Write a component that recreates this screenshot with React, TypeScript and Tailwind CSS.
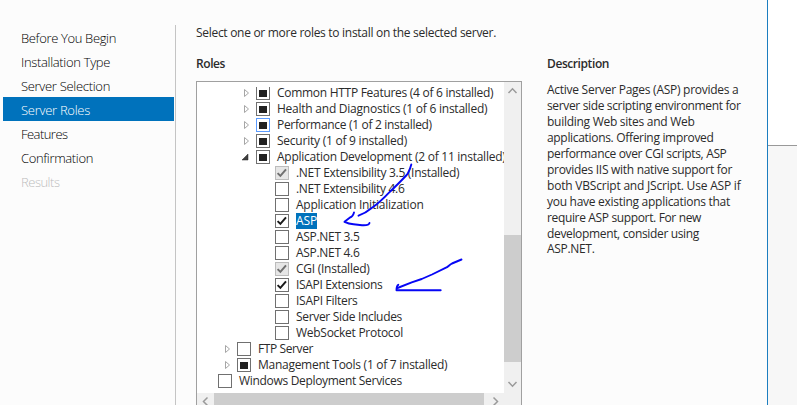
import { useLayoutEffect, useRef } from "react";

type Check = "empty" | "partial" | "checked" | "locked";

interface Role {
  label: string;
  width: number;
  level: 0 | 1 | 2 | 3;
  check: Check;
  arrow?: "closed" | "open";
  hot?: boolean;
  selected?: boolean;
}

const STEPS = [
  { label: "Before You Begin", width: 95 },
  { label: "Installation Type", width: 89 },
  { label: "Server Selection", width: 89 },
  { label: "Server Roles", width: 69, active: true },
  { label: "Features", width: 46.5 },
  { label: "Confirmation", width: 72 },
  { label: "Results", width: 38.5, disabled: true },
];

const ROLES: Role[] = [
  { label: "Common HTTP Features (4 of 6 installed)", width: 216.3, level: 2, check: "partial", arrow: "closed" },
  { label: "Health and Diagnostics (1 of 6 installed)", width: 210.3, level: 2, check: "partial", arrow: "closed" },
  { label: "Performance (1 of 2 installed)", width: 154.8, level: 2, check: "partial", arrow: "closed", hot: true },
  { label: "Security (1 of 9 installed)", width: 130, level: 2, check: "partial", arrow: "closed" },
  { label: "Application Development (2 of 11 installed)", width: 228.5, level: 2, check: "partial", arrow: "open" },
  { label: ".NET Extensibility 3.5 (Installed)", width: 163.3, level: 3, check: "locked" },
  { label: ".NET Extensibility 4.6", width: 108.5, level: 3, check: "empty" },
  { label: "Application Initialization", width: 127.5, level: 3, check: "empty" },
  { label: "ASP", width: 21, level: 3, check: "checked", selected: true },
  { label: "ASP.NET 3.5", width: 63.5, level: 3, check: "empty" },
  { label: "ASP.NET 4.6", width: 63.5, level: 3, check: "empty" },
  { label: "CGI (Installed)", width: 73.5, level: 3, check: "locked" },
  { label: "ISAPI Extensions", width: 86.3, level: 3, check: "checked" },
  { label: "ISAPI Filters", width: 61.5, level: 3, check: "empty" },
  { label: "Server Side Includes", width: 106, level: 3, check: "empty" },
  { label: "WebSocket Protocol", width: 107, level: 3, check: "empty" },
  { label: "FTP Server", width: 55, level: 1, check: "empty", arrow: "closed" },
  { label: "Management Tools (1 of 7 installed)", width: 189.3, level: 1, check: "partial", arrow: "closed" },
  { label: "Windows Deployment Services", width: 162.8, level: 0, check: "empty" },
];

const DESCRIPTION = [
  { text: "Active Server Pages (ASP) provides a", width: 191.5 },
  { text: "server side scripting environment for", width: 193.5 },
  { text: "building Web sites and Web", width: 147.5 },
  { text: "applications. Offering improved", width: 166.5 },
  { text: "performance over CGI scripts, ASP", width: 179.5 },
  { text: "provides IIS with native support for", width: 185 },
  { text: "both VBScript and JScript. Use ASP if", width: 193.5 },
  { text: "you have existing applications that", width: 183 },
  { text: "require ASP support. For new", width: 154 },
  { text: "development, consider using", width: 152 },
  { text: "ASP.NET.", width: 47.5 },
];

const INDENT = ["pl-[2px]", "pl-[21px]", "pl-[40px]", "pl-[59px]"];

/** One line of text whose tracking is adjusted to fill the given width. */
function Line({ text, width, className = "" }: { text: string; width: number; className?: string }) {
  const ref = useRef<HTMLSpanElement>(null);
  useLayoutEffect(() => {
    const el = ref.current;
    if (!el) return;
    el.style.letterSpacing = "0px";
    const natural = el.getBoundingClientRect().width;
    el.style.letterSpacing = `${(width - natural) / text.length}px`;
  }, [text, width]);
  return (
    <span ref={ref} className={`inline-block shrink-0 whitespace-pre ${className}`}>
      {text}
    </span>
  );
}

function CheckBox({ check, hot }: { check: Check; hot?: boolean }) {
  const border = hot ? "border-[#5b9bff]" : check === "locked" ? "border-[#bcbcbc]" : "border-[#707070]";
  return (
    <span
      className={`flex size-[14px] shrink-0 items-center justify-center border ${border} ${check === "locked" ? "bg-[#e6e6e6]" : "bg-white"}`}
    >
      {check === "partial" && <span className="h-[7px] w-2 bg-[#212121]" />}
      {(check === "checked" || check === "locked") && (
        <svg viewBox="0 0 12 12" className="size-3" fill="none">
          <path d="M1.6 6.1 4.4 8.9 10 2.4" stroke={check === "locked" ? "#707070" : "#1a1a1a"} strokeWidth="2" />
        </svg>
      )}
    </span>
  );
}

function Expander({ state }: { state?: "closed" | "open" }) {
  return (
    <svg viewBox="0 0 19 16" className="h-4 w-[19px] shrink-0" fill="none">
      {state === "closed" && <path d="M7.5 4.5v7l4-3.5z" stroke="#a6a6a6" />}
      {state === "open" && <path d="M11 5v6H5z" fill="#404040" stroke="#262626" strokeWidth=".5" />}
    </svg>
  );
}

function RoleRow({ role }: { role: Role }) {
  return (
    <div className={`flex h-4 shrink-0 items-center ${INDENT[role.level]}`}>
      <Expander state={role.arrow} />
      <CheckBox check={role.check} hot={role.hot} />
      <span className={`ml-[7px] flex h-4 items-center leading-4 ${role.selected ? "bg-[#0072bc] text-white" : ""}`}>
        <Line text={role.label} width={role.width} />
      </span>
    </div>
  );
}

function Chevron({ d }: { d: string }) {
  return (
    <svg viewBox="0 0 17 17" className="size-[17px] shrink-0" fill="none">
      <path d={d} stroke="#9a9a9a" strokeWidth="1.5" />
    </svg>
  );
}

export default function App() {
  return (
    <div className="flex h-[405px] w-[797px] overflow-hidden bg-[#fcfcfc] font-['Open_Sans','Noto_Sans',sans-serif] text-xs text-[#2b2b2b]">
      <nav className="mt-[25px] h-[380px] w-[176px] shrink-0 border-r border-[#c4c4c4] pl-[3px]">
        {STEPS.map((s) => (
          <div
            key={s.label}
            className={`flex h-6 w-[171px] items-center pl-[18px] pt-0.5 text-[13px] font-light ${s.active ? "bg-[#0072bc] text-white" : s.disabled ? "text-[#bdbdbd]" : "text-black"}`}
          >
            <Line text={s.label} width={s.width} className="leading-5" />
          </div>
        ))}
      </nav>

      <main className="relative flex w-[346px] shrink-0 flex-col pl-5">
        <div className="mt-[25px] h-4 leading-4">
          <Line text="Select one or more roles to install on the selected server." width={300} />
        </div>
        <div className="mt-[15px] h-4 font-semibold leading-4">
          <Line text="Roles" width={29} />
        </div>
        <div className="mt-[9px] h-[340px] shrink-0 border border-[#a0a0a0] bg-white">
          <div className="flex h-[311px]">
            <div className="flex w-[307px] flex-col overflow-hidden pt-[5px]">
              <div className="flex h-[304px] flex-col overflow-hidden">
                <div className="-mt-0.5 flex flex-col">
                  {ROLES.map((r) => (
                    <RoleRow key={r.label} role={r} />
                  ))}
                </div>
              </div>
            </div>
            <div className="flex w-[17px] shrink-0 flex-col bg-[#f0f0f0]">
              <Chevron d="M4.500 11 8.500 6.800l4 4.200" />
              <div className="mt-[136px] h-[127px] bg-[#cdcdcd]" />
              <div className="mt-[14px]">
                <Chevron d="m4.500 6 4 4.200L12.500 6" />
              </div>
            </div>
          </div>
          <div className="flex h-[17px] bg-[#f0f0f0]">
            <Chevron d="M10.500 4.500 6.500 8.500l4 4" />
            <div className="w-[270px] bg-[#cdcdcd]" />
            <Chevron d="m9.500 4.500 4 4-4 4" />
          </div>
        </div>
        <svg
          viewBox="0 0 797 405"
          className="pointer-events-none absolute -left-[176px] top-0 h-[405px] w-[797px]"
          fill="none"
          stroke="#0606f5"
          strokeWidth="1.9"
          strokeLinecap="round"
          strokeLinejoin="round"
        >
          <path d="M411.300 164.500C410 169 409 172 406.700 175 402 180 396 186 390 191.700 384 198 378 204 371.700 208 367 212 363 214 358.500 215.700" />
          <path d="M354 212.500C353 216 352 217 350 217.500L344.500 221.800C348 223.500 350 224 353.500 224.300L362 225.200C367 225.500 369 225 369.500 223" />
          <path d="M461.500 259.500 452 263.500C449 265 448 267 446 267.700L432 274.500 421.700 279 411.700 282.300 397.500 288" />
          <path d="M398.300 284.800C397 285.500 396.500 287 396.500 290.300L440.700 290.300" />
        </svg>
      </main>

      <aside className="w-[245px] shrink-0 pl-[25px] pt-14">
        <div className="h-4 font-semibold leading-4">
          <Line text="Description" width={62} />
        </div>
        <div className="mt-[10px]">
          {DESCRIPTION.map((l) => (
            <div key={l.text} className="h-4 leading-4 last:h-[14px] last:leading-[14px]">
              <Line text={l.text} width={l.width} />
            </div>
          ))}
        </div>
      </aside>

      <div className="flex h-[405px] w-[30px] shrink-0 flex-col border-l border-[#1c7ec0]">
        <div className="h-[146px] border-b border-[#999999] bg-white" />
        <div className="flex-1 bg-[#f7f7f7]" />
      </div>
    </div>
  );
}
